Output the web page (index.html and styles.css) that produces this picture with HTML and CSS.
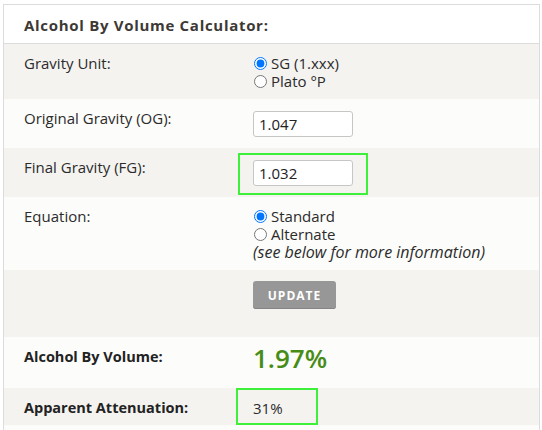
FILE: index.html
```html
<!DOCTYPE html>
<html>
<head>
<meta charset="utf-8">
<link rel="stylesheet" href="styles.css">
</head>
<body>
<div class="calc">
  <div class="calc-header">Alcohol By Volume Calculator:</div>

  <div class="row grey">
    <div class="label">Gravity Unit:</div>
    <div class="field">
      <label class="opt"><input type="radio" name="unit" checked><span>SG (1.xxx)</span></label>
      <label class="opt"><input type="radio" name="unit"><span>Plato °P</span></label>
    </div>
  </div>

  <div class="row white">
    <div class="label">Original Gravity (OG):</div>
    <div class="field"><input class="num" type="text" value="1.047"></div>
  </div>

  <div class="row grey">
    <div class="label">Final Gravity (FG):</div>
    <div class="field"><span class="hl hl-input"><input class="num" type="text" value="1.032"></span></div>
  </div>

  <div class="row white">
    <div class="label">Equation:</div>
    <div class="field">
      <label class="opt"><input type="radio" name="eq" checked><span>Standard</span></label>
      <label class="opt"><input type="radio" name="eq"><span>Alternate</span></label>
      <div class="note">(see below for more information)</div>
    </div>
  </div>

  <div class="row grey row-btn">
    <div class="label"></div>
    <div class="field"><button class="btn" type="button">UPDATE</button></div>
  </div>

  <div class="row white row-abv">
    <div class="label strong">Alcohol By Volume:</div>
    <div class="field"><span class="abv">1.97%</span></div>
  </div>

  <div class="row grey row-att">
    <div class="label strong">Apparent Attenuation:</div>
    <div class="field"><span class="hl hl-result">31%</span></div>
  </div>

  <div class="row white row-tail"></div>
</div>
</body>
</html>
```

FILE: styles.css
```css
* { box-sizing: border-box; }

html, body {
  margin: 0;
  padding: 0;
  background: #ffffff;
}

body {
  font-family: "Open Sans", "Liberation Sans", sans-serif;
  font-size: 15px;
  line-height: 18px;
  color: #2b2b2b;
}

.calc {
  margin: 4px 2px 0 3px;
  border: 1px solid #dcdcdc;
  background: #ffffff;
}

.calc-header {
  height: 39px;
  padding: 11px 0 0 20px;
  font-size: 15px;
  font-weight: 700;
  letter-spacing: 0.7px;
  color: #3d3935;
  border-bottom: 1px solid #dcdcdc;
  background: #ffffff;
}

.row {
  display: grid;
  grid-template-columns: 229px 1fr;
  padding: 10px 0 9px 20px;
}

.grey { background: #f4f3f0; }
.white { background: #fcfcfa; }

.label { color: #2b2b2b; }
.label.strong { font-size: 14.5px; font-weight: 700; color: #222; }

.field {
  display: flex;
  flex-direction: column;
  align-items: flex-start;
}

.opt {
  display: flex;
  align-items: center;
  height: 18px;
}

.opt input {
  flex: none;
  width: 13px;
  height: 13px;
  margin: 0 4px 0 1px;
}

.note {
  font-size: 16px;
  font-style: italic;
}

.num {
  width: 100px;
  height: 26px;
  margin: 2px 0;
  padding: 0 5px;
  border: 1px solid #c6c6c6;
  border-radius: 3px;
  background: #ffffff;
  font-family: "Open Sans", "Liberation Sans", sans-serif;
  font-size: 15px;
  color: #222;
}

.hl { position: relative; display: inline-block; }
.hl::after {
  content: "";
  position: absolute;
  border: 2px solid #3ff03a;
  pointer-events: none;
}
.hl-input::after { left: -15px; right: -15px; top: -5px; bottom: -7px; }

.hl-result { width: 61px; }
.hl-result::after { left: -17px; width: 78px; top: -11px; bottom: -8px; }

.row-btn { padding-bottom: 28px; }

.btn {
  width: 83px;
  height: 28px;
  margin-top: 1px;
  border: 0;
  border-radius: 3px;
  background: #979797;
  box-shadow: inset 0 -1px 0 #858585;
  color: #ffffff;
  font-family: "Open Sans", "Liberation Sans", sans-serif;
  font-size: 12px;
  font-weight: 700;
  letter-spacing: 1px;
}

.row-abv { padding-top: 11px; padding-bottom: 20px; }
.abv {
  font-size: 26px;
  line-height: 20px;
  font-weight: 600;
  color: #478c16;
}

.row-att { padding: 11px 0 8px 20px; }

.row-tail { height: 20px; padding: 0; }
```
